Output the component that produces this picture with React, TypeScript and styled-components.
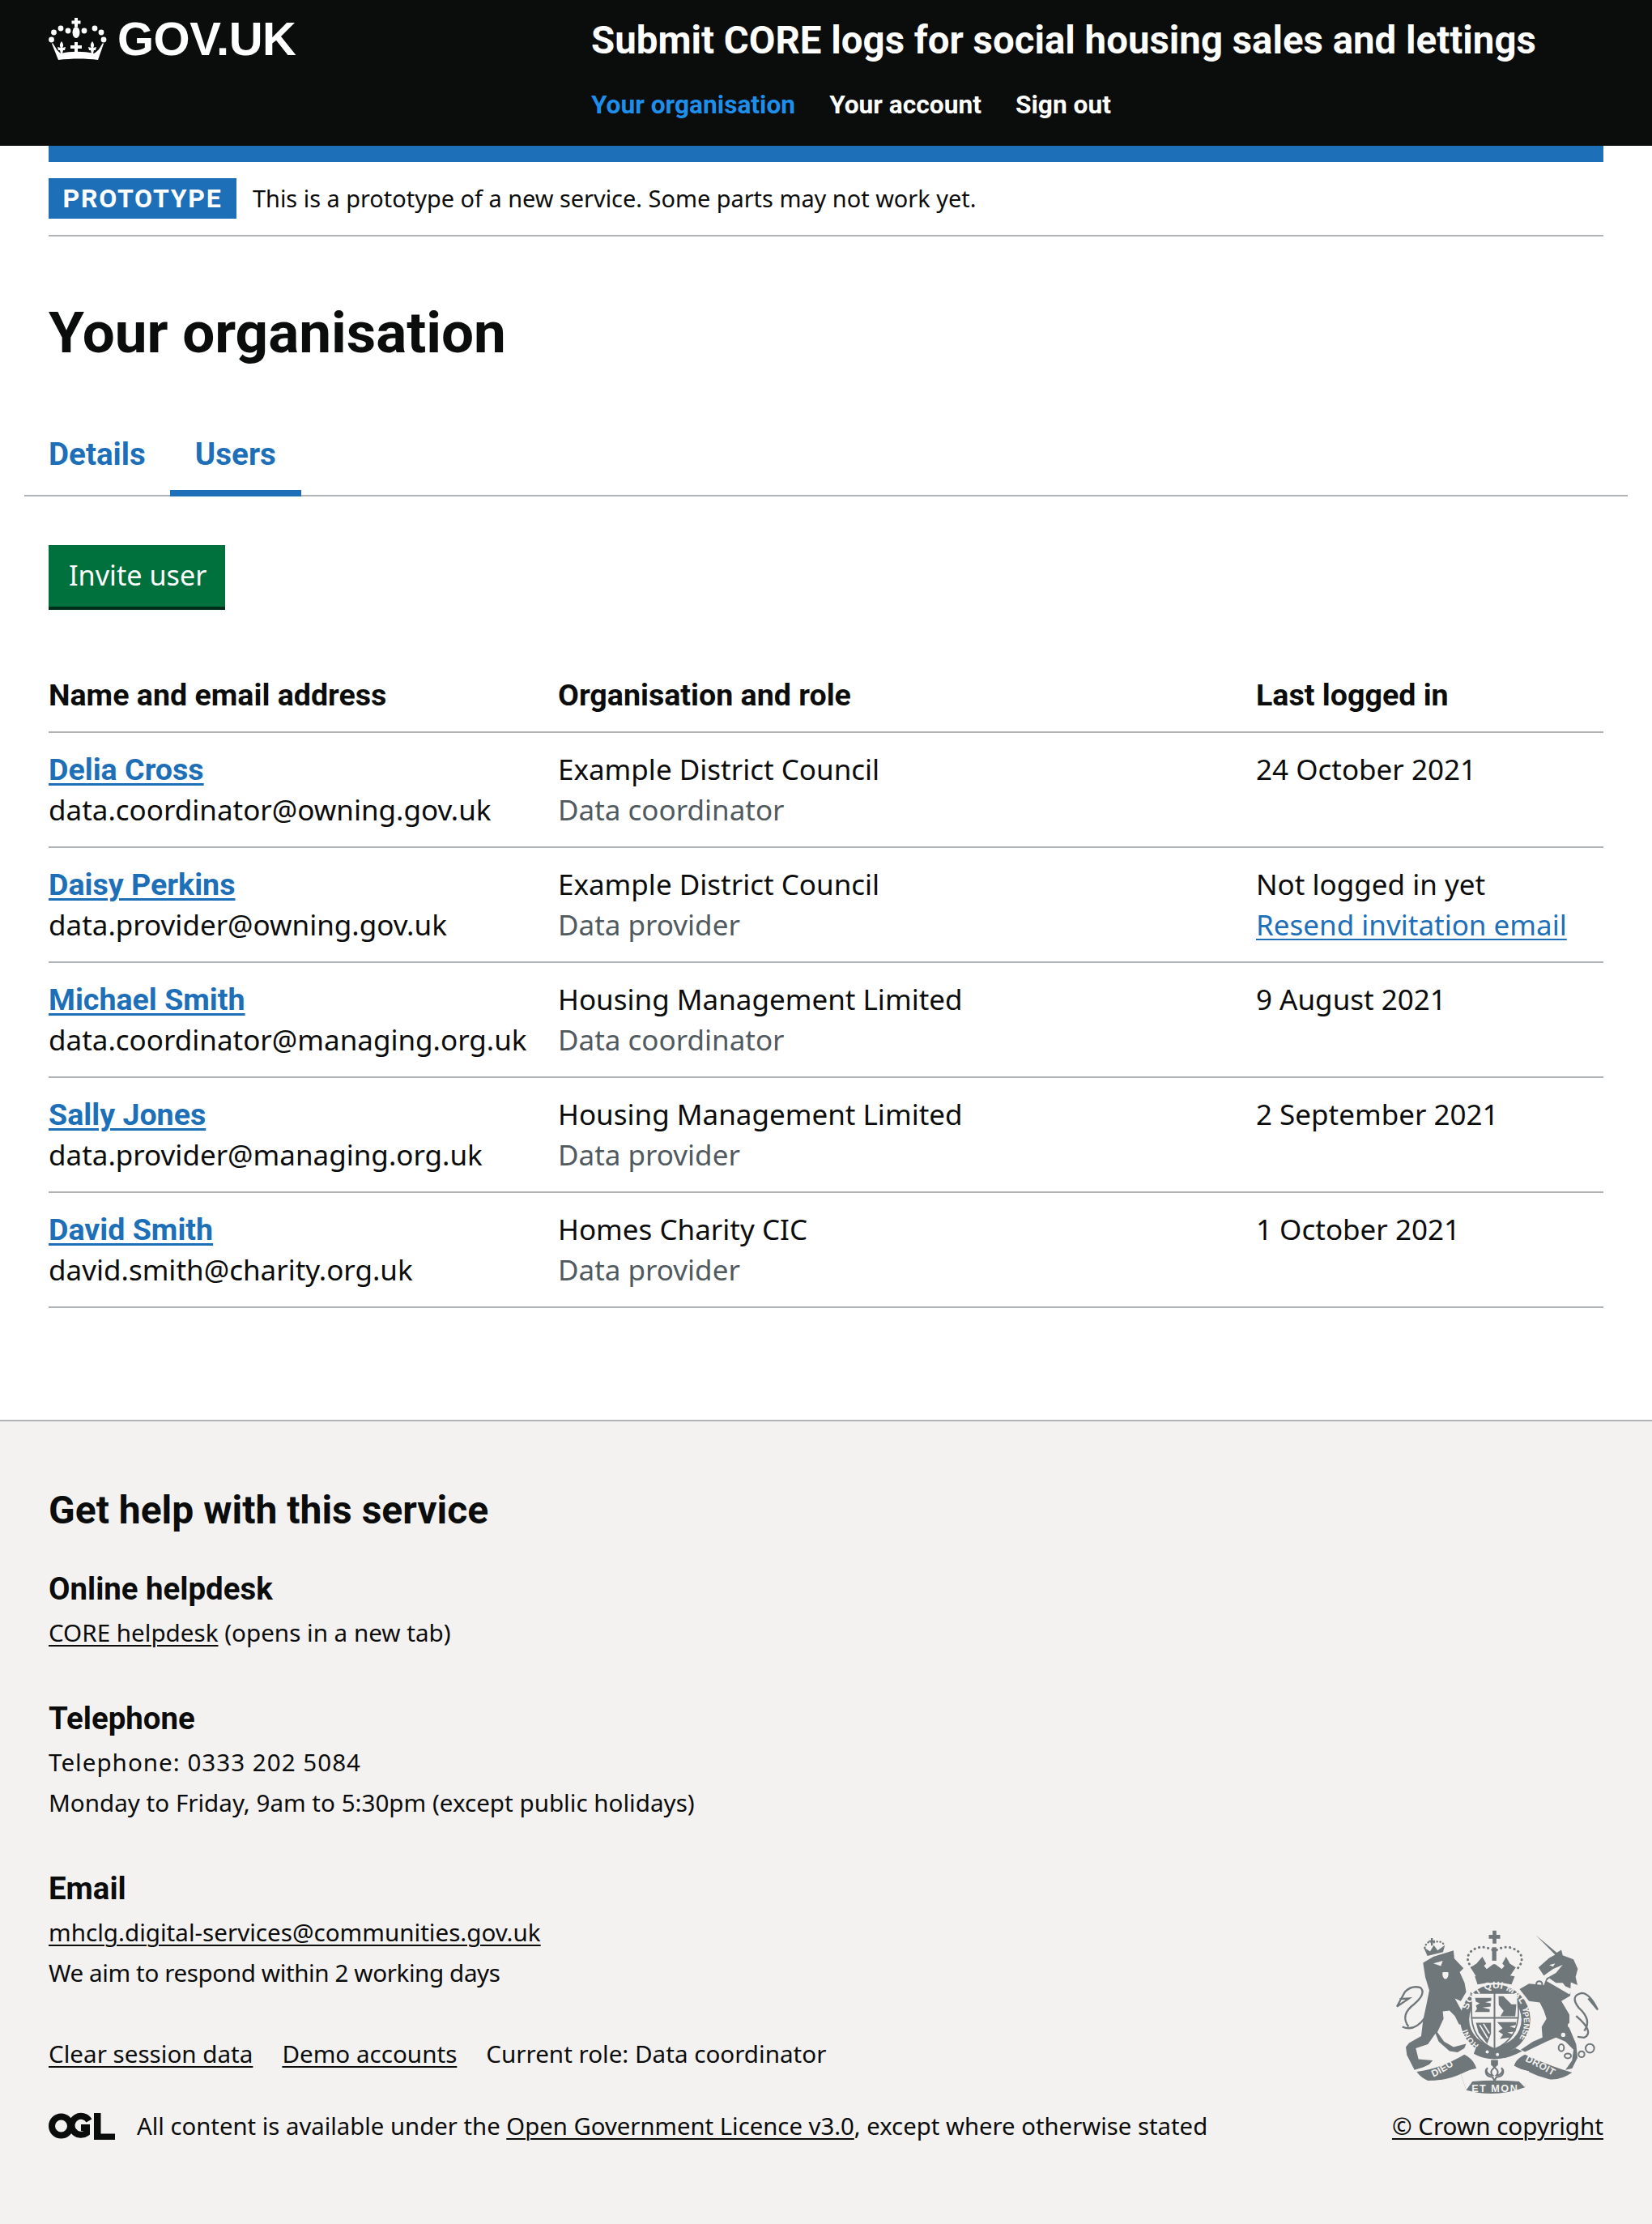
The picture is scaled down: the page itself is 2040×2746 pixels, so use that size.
import React from "react";
import styled, { createGlobalStyle } from "styled-components";

const boldFont = `Roboto, "Noto Sans", sans-serif`;

const Global = createGlobalStyle`
  html, body {
    margin: 0;
    padding: 0;
    background: #fff;
    color: #0b0c0c;
    font-family: "Noto Sans", "Open Sans", sans-serif;
  }
  * { box-sizing: border-box; }
`;

const Header = styled.header`
  background: #0b0c0c;
  height: 180px;
  padding: 0 60px;
  display: flex;
`;

const LogoLink = styled.a`
  width: 670px;
  padding-top: 22px;
  display: flex;
  align-items: flex-start;
  gap: 13px;
  color: #fff;
  font-family: "Liberation Sans", Arial, sans-serif;
  font-weight: 700;
  font-size: 58px;
  line-height: 52px;
  letter-spacing: -0.5px;
`;

const ServiceBlock = styled.div`
  padding-top: 23px;
`;

const ServiceName = styled.div`
  color: #fff;
  font-family: ${boldFont};
  font-weight: 700;
  font-size: 47.4px;
  line-height: 54px;
`;

const NavList = styled.nav`
  display: flex;
  gap: 42px;
  margin-top: 28px;
`;

const NavLink = styled.a<{ $active?: boolean }>`
  color: ${({ $active }) => ($active ? "#1d8feb" : "#fff")};
  font-family: ${boldFont};
  font-weight: 700;
  font-size: 31.7px;
  line-height: 50px;
`;

const Main = styled.main`
  padding: 0 60px;
`;

const PhaseBanner = styled.div`
  border-top: 20px solid #1d70b8;
  border-bottom: 2px solid #b1b4b6;
  padding: 20px 0;
  display: flex;
  align-items: center;
  gap: 20px;
`;

const PhaseTag = styled.strong`
  width: 232px;
  height: 50px;
  background: #1d70b8;
  color: #fff;
  font-family: ${boldFont};
  font-size: 32px;
  font-weight: 700;
  letter-spacing: 1.75px;
  display: flex;
  align-items: center;
  justify-content: center;
`;

const PhaseText = styled.span`
  font-size: 28.9px;
  line-height: 50px;
`;

const PageTitle = styled.h1`
  margin: 75px 0 0;
  font-family: ${boldFont};
  font-size: 71px;
  line-height: 88px;
  font-weight: 700;
`;

const TabBar = styled.div`
  margin: 66px -30px 0;
  padding: 0 30px;
  height: 92px;
  border-bottom: 2px solid #b1b4b6;
  display: flex;
`;

const Tab = styled.a<{ $active?: boolean }>`
  color: #1d70b8;
  font-family: ${boldFont};
  font-weight: 700;
  font-size: 38.6px;
  line-height: 50px;
  height: 92px;
  padding-top: 15px;
  ${({ $active }) =>
    $active
      ? `padding-left: 31px; padding-right: 31px; margin-left: 30px; border-bottom: 8px solid #1d70b8;`
      : ""}
`;

const InviteButton = styled.a`
  display: inline-block;
  margin-top: 60px;
  width: 218px;
  height: 80px;
  padding: 12px 0 0 25px;
  background: #00703c;
  box-shadow: inset 0 -4px 0 #002d18;
  color: #fff;
  font-size: 34.2px;
  line-height: 50px;
`;

const UserTable = styled.table`
  width: 100%;
  margin-top: 80px;
  border-collapse: collapse;
  font-size: 35px;
  line-height: 50px;
  table-layout: fixed;
`;

const HeadCell = styled.th`
  text-align: left;
  font-family: ${boldFont};
  font-size: 37.6px;
  font-weight: 700;
  padding: 0 0 20px;
  border-bottom: 2px solid #b1b4b6;
`;

const BodyCell = styled.td`
  padding: 20px 0;
  vertical-align: top;
  border-bottom: 2px solid #b1b4b6;
`;

const NameLink = styled.a`
  display: block;
  color: #1d70b8;
  font-family: ${boldFont};
  font-size: 37.6px;
  font-weight: 700;
  text-decoration: underline;
  text-decoration-thickness: 3px;
  text-underline-offset: 4px;
`;

const Muted = styled.div`
  color: #505a5f;
`;

const PlainLink = styled.a`
  display: block;
  color: #1d70b8;
  text-decoration: underline;
  text-decoration-thickness: 2px;
  text-underline-offset: 4px;
`;

const Footer = styled.footer`
  margin-top: 138px;
  background: #f3f2f1;
  border-top: 2px solid #b1b4b6;
  height: 993px;
  padding: 82px 60px 0;
  display: flex;
  justify-content: space-between;
  align-items: flex-start;
`;

const FooterLeft = styled.div`
  display: flex;
  flex-direction: column;
`;

const HelpTitle = styled.h2`
  margin: 0 0 44px;
  font-family: ${boldFont};
  font-size: 48px;
  line-height: 56px;
  font-weight: 700;
`;

const HelpBlock = styled.div`
  margin-bottom: 56px;
`;

const HelpHeading = styled.h3`
  margin: 0 0 4px;
  font-family: ${boldFont};
  font-size: 38.4px;
  line-height: 50px;
  font-weight: 700;
`;

const HelpLine = styled.p<{ $spacing?: number }>`
  margin: 0;
  font-size: 29.6px;
  line-height: 50px;
  letter-spacing: ${({ $spacing }) => $spacing ?? 0}px;
`;

const FooterLink = styled.a`
  color: #0b0c0c;
  text-decoration: underline;
  text-decoration-thickness: 2px;
  text-underline-offset: 4px;
`;

const MetaRow = styled.div`
  display: flex;
  gap: 36px;
  font-size: 29.6px;
  line-height: 50px;
  margin-top: -6px;
`;

const LicenceRow = styled.div`
  display: flex;
  align-items: center;
  gap: 27px;
  margin-top: 39px;
  font-size: 29.3px;
  line-height: 50px;
`;

const FooterRight = styled.div`
  margin-top: 544px;
  display: flex;
  flex-direction: column;
  align-items: flex-end;
`;

const CrestWrap = styled.div`
  margin-right: 5px;
  line-height: 0;
`;

const CopyrightLink = styled(FooterLink)`
  margin-top: 11px;
  font-size: 29.6px;
  line-height: 50px;
`;

const users = [
  { name: "Delia Cross", email: "data.coordinator@owning.gov.uk", org: "Example District Council", role: "Data coordinator", last: "24 October 2021" },
  { name: "Daisy Perkins", email: "data.provider@owning.gov.uk", org: "Example District Council", role: "Data provider", last: "Not logged in yet", resend: true },
  { name: "Michael Smith", email: "data.coordinator@managing.org.uk", org: "Housing Management Limited", role: "Data coordinator", last: "9 August 2021" },
  { name: "Sally Jones", email: "data.provider@managing.org.uk", org: "Housing Management Limited", role: "Data provider", last: "2 September 2021" },
  { name: "David Smith", email: "david.smith@charity.org.uk", org: "Homes Charity CIC", role: "Data provider", last: "1 October 2021" }
];

const CrownLogo = () => (
  <svg width="72" height="52" viewBox="0 0 72 52" fill="#fff">
    <path d="M32 0h4v3.5h3.5v4H36V11h-4V7.5h-3.5v-4H32z" />
    <ellipse cx="34" cy="18" rx="4.5" ry="7" />
    <circle cx="24" cy="16" r="3.4" />
    <circle cx="44" cy="16" r="3.4" />
    <circle cx="15" cy="13" r="3.4" />
    <circle cx="57" cy="13" r="3.4" />
    <circle cx="6.5" cy="18" r="3.4" />
    <circle cx="65" cy="18" r="3.4" />
    <circle cx="3.5" cy="27" r="3.4" />
    <circle cx="68" cy="27" r="3.4" />
    <path d="M32 30h4v4h5v4h-5v5h-4v-5h-5v-4h5z" />
    <path d="M16 29c2 3 3 5 1 8l4-1-1 4h-2l-1 4h-2l-1-4h-2l-1-4 4 1c-2-3-1-5 1-8z" />
    <path d="M54 29c2 3 3 5 1 8l4-1-1 4h-2l-1 4h-2l-1-4h-2l-1-4 4 1c-2-3-1-5 1-8z" />
    <path d="M5 31l5 8c1 2 3 3 5 5 12-3 28-3 41 0 3-2 4-3 6-5l5-8 1 1-7 20c-15-2-32-2-49 0L4 32z" />
  </svg>
);

const OglLogo = () => (
  <svg width="82" height="34" viewBox="0 0 82 34" fill="#0b0c0c">
    <circle cx="15.5" cy="17" r="11.5" fill="none" stroke="#0b0c0c" strokeWidth="8" />
    <path
      d="M50 10.5A11.5 11.5 0 1 0 47 25.5V19H40"
      fill="none"
      stroke="#0b0c0c"
      strokeWidth="8"
    />
    <path d="M56 1h8.5v25.5H82V34H56z" />
  </svg>
);

const crestColor = "#6f777a";
const crestBg = "#f3f2f1";

const CoatOfArms = () => (
  <svg width="252" height="208" viewBox="130 60 755 625" fill={crestColor}>
    <defs>
      <path id="garterTop" d="M398 372A104 104 0 0 1 604 372" />
      <path id="garterRight" d="M600 372A112 112 0 0 1 560 500" />
      <path id="garterLeft" d="M440 492A112 112 0 0 1 392 420" />
      <path id="ribbonLeft" d="M270 612Q320 590 372 548" />
      <path id="ribbonRight" d="M610 552Q670 580 735 620" />
    </defs>
    {/* lion */}
    <path d="M232 188L270 165L345 142L348 172L382 208L368 222L386 262L392 296L372 330L350 320L380 375L405 410L395 425L365 415L350 385L330 365L305 368L308 395L285 445L310 480L345 500L392 488L385 505L360 520L330 515L290 480L278 450L250 490L205 505L215 545L268 550L255 565L232 575L200 585L172 530L168 500L180 485L225 460L232 400L245 340L255 290L240 240Z" />
    <path d="M270 190L305 180L298 200ZM305 222a11 18 0 1 0 20 0z" fill={crestBg} />
    <path
      d="M240 390Q200 445 155 425M178 425Q145 380 200 340Q245 300 222 280Q190 270 165 295L135 350L180 320L145 322"
      fill="none"
      stroke={crestColor}
      strokeWidth="7"
    />
    {/* lion crown */}
    <path d="M248 162L234 130L258 146L272 122L286 142L313 122L306 148Z" />
    <path d="M261 96h7v8h8v6h-8v14h-7v-14h-8v-6h8z" />
    <path
      d="M238 132Q245 106 264 112M272 112Q300 102 312 124"
      fill="none"
      stroke={crestColor}
      strokeWidth="7"
      strokeDasharray="1 11"
      strokeLinecap="round"
    />
    {/* royal crown */}
    <path d="M490 68h14v16h14v14h-14v18h-14V98h-14V84h14z" />
    <g fill="none" stroke={crestColor} strokeWidth="9" strokeDasharray="1 16" strokeLinecap="round">
      <path d="M490 140Q440 115 405 150Q385 180 420 212" />
      <path d="M505 140Q550 115 590 150Q610 180 580 212" />
    </g>
    <path d="M488 130h16v50h-16z" />
    <path d="M452 165l14 26-8 8 10 12 24-18 8 0 24 18 10-12-8-8 14-26 14 26 22 14-22 32H428l-20-32 22-14z" />
    <path d="M424 238Q497 220 572 238L560 268Q497 255 434 268Z" />
    {/* garter */}
    <circle cx="500" cy="398" r="130" />
    <circle cx="500" cy="398" r="97" fill={crestBg} />
    <path d="M410 300H582L586 370Q586 470 497 508Q408 470 412 370Z" fill={crestBg} stroke={crestColor} strokeWidth="5" />
    <path d="M497 296V508M412 392H586" stroke={crestColor} strokeWidth="6" />
    <g fill={crestColor}>
      <path d="M425 318h60v10l-22 6 20 4v12l-30 4 26 6v10h-55l8-12-4-12 14-8-14-6z" />
      <path d="M512 312h18l30 30 18 0-4 44h-55l12-20-18-22z" />
      <path d="M507 408h70v10l-24 6 22 6v12l-30 4 20 8-6 10-42 6 12-16-18-12 16-12z" />
      <path d="M428 410h56v40l-14 38-32-42z" />
    </g>
    <path d="M442 418l30 50M456 414l22 36" stroke={crestBg} strokeWidth="5" fill="none" />
    <text fontSize="36" fontWeight="700" fill={crestBg} fontFamily="Liberation Sans, sans-serif">
      <textPath href="#garterTop" startOffset="3%" letterSpacing="1">SOIT QUI MAL Y</textPath>
    </text>
    <text fontSize="30" fontWeight="700" fill={crestBg} fontFamily="Liberation Sans, sans-serif">
      <textPath href="#garterRight">PENSE</textPath>
    </text>
    <text fontSize="30" fontWeight="700" fill={crestBg} fontFamily="Liberation Sans, sans-serif">
      <textPath href="#garterLeft">HONI</textPath>
    </text>
    <path d="M430 498Q500 545 575 505L600 515Q500 570 420 525Z" />
    <circle cx="470" cy="518" r="6" fill={crestBg} />
    <circle cx="508" cy="528" r="6" fill={crestBg} />
    {/* unicorn */}
    <path d="M650 85L728 150L745 140L750 160L790 175L806 210L798 240L805 270L780 260L778 310L745 330L775 380L775 430L800 490L805 540L785 580L760 585L785 550L790 510L760 480L725 465L690 480L610 518L595 510L640 480L675 465L672 425L690 395L680 365L665 335L625 330L590 285L625 265L680 270L690 245L725 225L750 195L715 210L680 235L660 205L700 170L722 158Z" />
    <path d="M690 255L775 305L785 285L760 275L750 262L725 262L700 245ZM700 196l22-6-8 12z" fill={crestBg} />
    <g fill={crestBg}>
      <circle cx="778" cy="420" r="9" />
      <circle cx="752" cy="455" r="8" />
      <circle cx="785" cy="375" r="11" />
      <circle cx="652" cy="348" r="11" />
    </g>
    <path
      d="M800 385Q870 445 830 465L805 462M830 440Q860 400 810 355Q775 310 820 300Q850 300 880 362L845 320"
      fill="none"
      stroke={crestColor}
      strokeWidth="7"
    />
    <g fill="none" stroke={crestColor} strokeWidth="6">
      <circle cx="663" cy="267" r="11" />
      <ellipse cx="745" cy="503" rx="10" ry="13" />
      <ellipse cx="769" cy="533" rx="12" ry="9" />
      <circle cx="820" cy="527" r="11" />
      <circle cx="851" cy="505" r="16" />
    </g>
    {/* motto */}
    <path d="M208 592Q300 580 385 528Q420 545 430 580Q400 585 378 600Q400 625 415 628Q500 620 588 628Q610 620 625 590Q595 585 570 570Q575 545 610 528Q700 570 785 595Q740 625 700 620Q660 610 620 590L610 650Q500 690 392 660L372 600Q320 625 250 625Q225 615 208 592Z" />
    <path d="M430 580Q400 585 372 600L392 660 415 628Q400 605 430 580ZM570 570Q595 585 625 590L610 650 588 628Q600 600 570 570Z" fill={crestBg} />
    <text fontSize="36" fontWeight="700" fill={crestBg} fontFamily="Liberation Sans, sans-serif">
      <textPath href="#ribbonLeft" letterSpacing="1">DIEU</textPath>
    </text>
    <text x="412" y="668" fontSize="38" fontWeight="700" fill={crestBg} fontFamily="Liberation Sans, sans-serif" textLength="170">
      ET MON
    </text>
    <text fontSize="36" fontWeight="700" fill={crestBg} fontFamily="Liberation Sans, sans-serif">
      <textPath href="#ribbonRight" letterSpacing="1">DROIT</textPath>
    </text>
    <path
      d="M497 575C485 585 480 595 490 605C470 605 462 585 472 578C460 585 462 605 480 610L490 612 497 625 504 612 514 610C532 605 534 585 522 578C532 585 524 605 504 605C514 595 509 585 497 575Z"
      stroke={crestColor}
      strokeWidth="6"
      fill="none"
    />
    <path d="M484 548h26v18l-13 12-13-12z" />
  </svg>
);

export default function App() {
  return (
    <>
      <Global />
      <Header>
        <LogoLink>
          <CrownLogo />
          GOV.UK
        </LogoLink>
        <ServiceBlock>
          <ServiceName>Submit CORE logs for social housing sales and lettings</ServiceName>
          <NavList>
            <NavLink $active>Your organisation</NavLink>
            <NavLink>Your account</NavLink>
            <NavLink>Sign out</NavLink>
          </NavList>
        </ServiceBlock>
      </Header>
      <Main>
        <PhaseBanner>
          <PhaseTag>PROTOTYPE</PhaseTag>
          <PhaseText>This is a prototype of a new service. Some parts may not work yet.</PhaseText>
        </PhaseBanner>
        <PageTitle>Your organisation</PageTitle>
        <TabBar>
          <Tab>Details</Tab>
          <Tab $active>Users</Tab>
        </TabBar>
        <InviteButton>Invite user</InviteButton>
        <UserTable>
          <colgroup>
            <col style={{ width: 629 }} />
            <col style={{ width: 862 }} />
            <col />
          </colgroup>
          <thead>
            <tr>
              <HeadCell>Name and email address</HeadCell>
              <HeadCell>Organisation and role</HeadCell>
              <HeadCell>Last logged in</HeadCell>
            </tr>
          </thead>
          <tbody>
            {users.map((user) => (
              <tr key={user.name}>
                <BodyCell>
                  <NameLink>{user.name}</NameLink>
                  {user.email}
                </BodyCell>
                <BodyCell>
                  {user.org}
                  <Muted>{user.role}</Muted>
                </BodyCell>
                <BodyCell>
                  {user.last}
                  {user.resend && <PlainLink>Resend invitation email</PlainLink>}
                </BodyCell>
              </tr>
            ))}
          </tbody>
        </UserTable>
      </Main>
      <Footer>
        <FooterLeft>
          <HelpTitle>Get help with this service</HelpTitle>
          <HelpBlock>
            <HelpHeading>Online helpdesk</HelpHeading>
            <HelpLine>
              <FooterLink>CORE helpdesk</FooterLink> (opens in a new tab)
            </HelpLine>
          </HelpBlock>
          <HelpBlock>
            <HelpHeading>Telephone</HelpHeading>
            <HelpLine $spacing={1}>Telephone: 0333 202 5084</HelpLine>
            <HelpLine>Monday to Friday, 9am to 5:30pm (except public holidays)</HelpLine>
          </HelpBlock>
          <HelpBlock>
            <HelpHeading>Email</HelpHeading>
            <HelpLine>
              <FooterLink>mhclg.digital-services@communities.gov.uk</FooterLink>
            </HelpLine>
            <HelpLine $spacing={-0.4}>We aim to respond within 2 working days</HelpLine>
          </HelpBlock>
          <MetaRow>
            <FooterLink>Clear session data</FooterLink>
            <FooterLink>Demo accounts</FooterLink>
            <span>Current role: Data coordinator</span>
          </MetaRow>
          <LicenceRow>
            <OglLogo />
            <span>
              All content is available under the <FooterLink>Open Government Licence v3.0</FooterLink>, except where otherwise stated
            </span>
          </LicenceRow>
        </FooterLeft>
        <FooterRight>
          <CrestWrap>
            <CoatOfArms />
          </CrestWrap>
          <CopyrightLink>© Crown copyright</CopyrightLink>
        </FooterRight>
      </Footer>
    </>
  );
}
